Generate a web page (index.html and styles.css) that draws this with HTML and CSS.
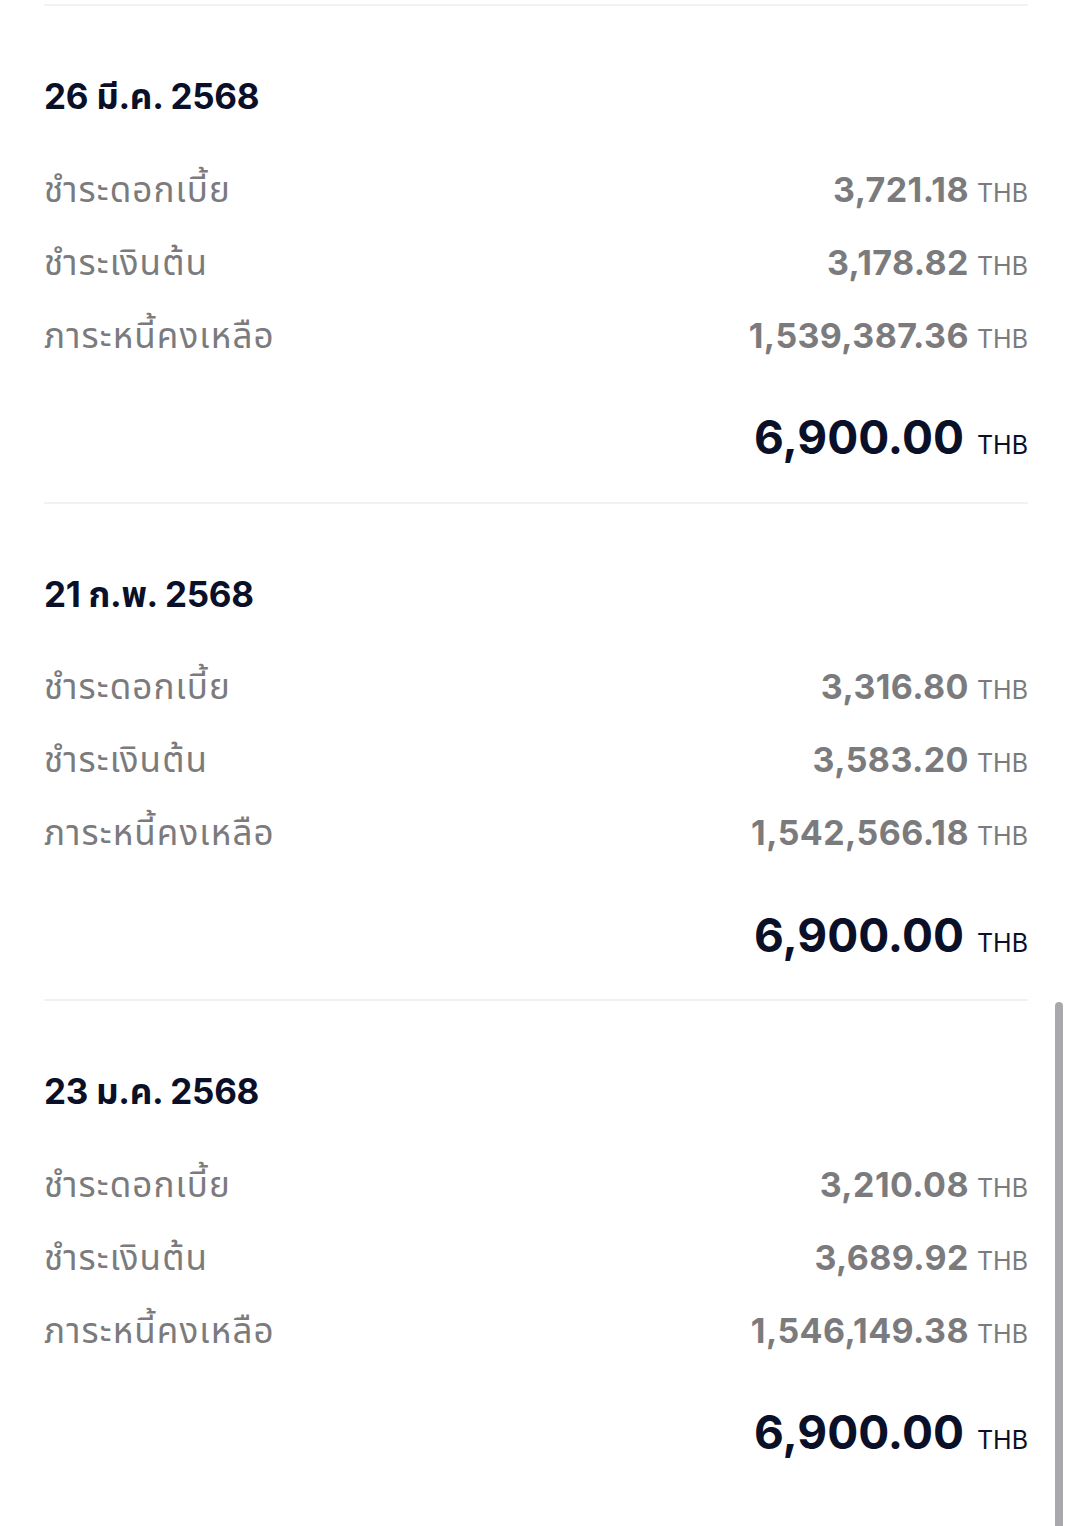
FILE: index.html
```html
<!DOCTYPE html>
<html lang="th">
<head>
<meta charset="utf-8">
<link rel="stylesheet" href="styles.css">
</head>
<body>
<div class="list">
  <section class="entry">
    <h2 class="date">26 มี.ค. 2568</h2>
    <div class="rows">
      <div class="row"><span class="label">ชำระดอกเบี้ย</span><span class="value">3,721.18<span class="cur">THB</span></span></div>
      <div class="row"><span class="label">ชำระเงินต้น</span><span class="value">3,178.82<span class="cur">THB</span></span></div>
      <div class="row"><span class="label">ภาระหนี้คงเหลือ</span><span class="value">1,539,387.36<span class="cur">THB</span></span></div>
    </div>
    <div class="total">6,900.00<span class="cur">THB</span></div>
  </section>
  <section class="entry">
    <h2 class="date">21 ก.พ. 2568</h2>
    <div class="rows">
      <div class="row"><span class="label">ชำระดอกเบี้ย</span><span class="value">3,316.80<span class="cur">THB</span></span></div>
      <div class="row"><span class="label">ชำระเงินต้น</span><span class="value">3,583.20<span class="cur">THB</span></span></div>
      <div class="row"><span class="label">ภาระหนี้คงเหลือ</span><span class="value">1,542,566.18<span class="cur">THB</span></span></div>
    </div>
    <div class="total">6,900.00<span class="cur">THB</span></div>
  </section>
  <section class="entry">
    <h2 class="date">23 ม.ค. 2568</h2>
    <div class="rows">
      <div class="row"><span class="label">ชำระดอกเบี้ย</span><span class="value">3,210.08<span class="cur">THB</span></span></div>
      <div class="row"><span class="label">ชำระเงินต้น</span><span class="value">3,689.92<span class="cur">THB</span></span></div>
      <div class="row"><span class="label">ภาระหนี้คงเหลือ</span><span class="value">1,546,149.38<span class="cur">THB</span></span></div>
    </div>
    <div class="total">6,900.00<span class="cur">THB</span></div>
  </section>
</div>
<div class="scrollbar"></div>
</body>
</html>
```
FILE: styles.css
```css
html, body {
  margin: 0;
  padding: 0;
  background: #ffffff;
}
body {
  font-family: "Inter", "Noto Sans Thai", "Noto Sans", sans-serif;
  overflow: hidden;
  height: 1526px;
  position: relative;
}
.list {
  padding: 4px 44px 0 44px;
}
.entry {
  border-top: 2px solid #f2f2f3;
  padding: 66px 0 34.5px 0;
}
.date {
  margin: 0;
  font-size: 35px;
  line-height: 48px;
  font-weight: 700;
  color: #0b1029;
  letter-spacing: -0.3px;
}
.rows {
  margin-top: 32.5px;
  display: flex;
  flex-direction: column;
}
.row {
  display: flex;
  justify-content: space-between;
  align-items: baseline;
  height: 73px;
  line-height: 73px;
}
.label {
  font-size: 35px;
  letter-spacing: 1.1px;
  color: #7b7b7e;
}
.value {
  font-size: 34px;
  font-weight: 700;
  letter-spacing: 0.4px;
  color: #7b7b7e;
}
.value .cur {
  font-size: 25px;
  font-weight: 400;
  letter-spacing: 0;
  margin-left: 8px;
}
.total {
  margin-top: 35.5px;
  height: 60px;
  line-height: 60px;
  text-align: right;
  font-size: 46px;
  font-weight: 700;
  color: #0b1029;
}
.total .cur {
  font-size: 25px;
  font-weight: 400;
  margin-left: 13px;
}
.scrollbar {
  position: absolute;
  left: 1055px;
  top: 1002px;
  width: 8px;
  height: 540px;
  border-radius: 4px;
  background: #a9a9ab;
}
```
